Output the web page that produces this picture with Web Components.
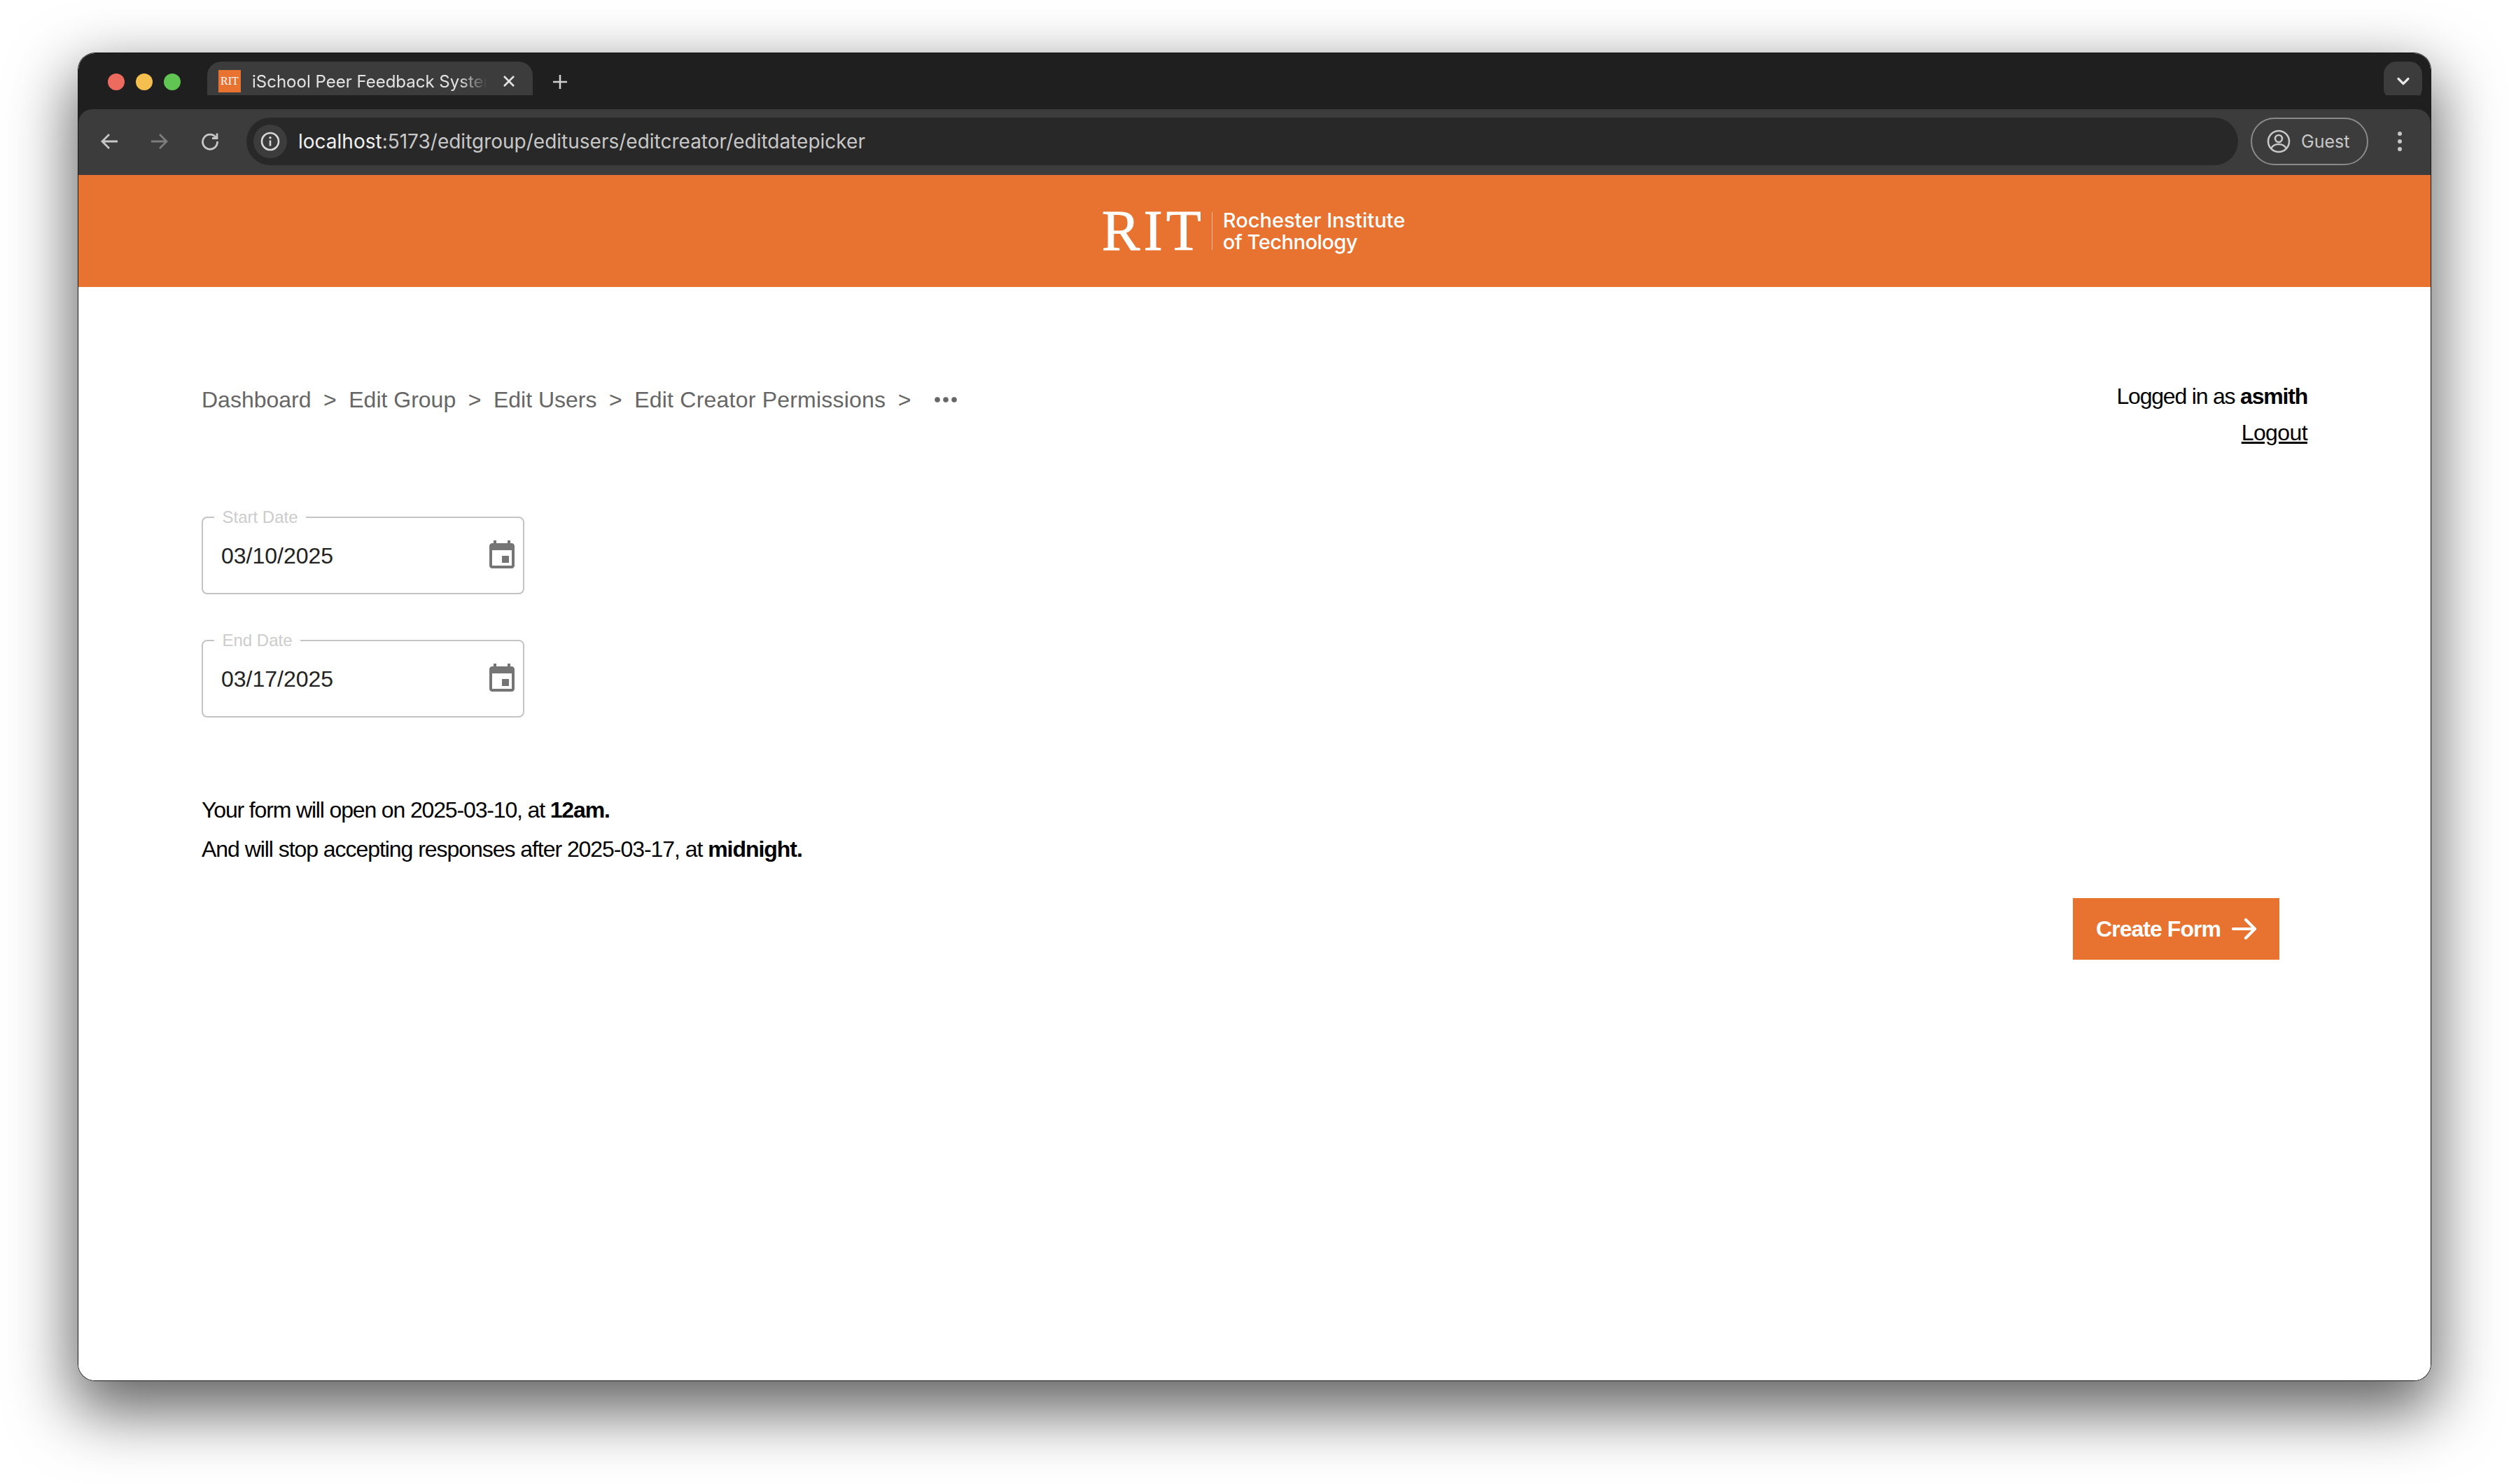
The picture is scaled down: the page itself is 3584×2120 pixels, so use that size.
<!DOCTYPE html>
<html lang="en">
<head>
<meta charset="utf-8">
<title>iSchool Peer Feedback System</title>
<style>
  html, body { margin: 0; height: 100%; background: #fff; }
  body { padding: 76px 112px 148px 112px; box-sizing: border-box; height: 2120px; overflow: hidden; display: flex; }
</style>
</head>
<body>
<browser-window>
  <tab-strip title-text="iSchool Peer Feedback System"></tab-strip>
  <address-bar host-name="localhost" path-name=":5173/editgroup/editusers/editcreator/editdatepicker"></address-bar>
  <site-banner></site-banner>
  <page-content>
    <div slot="top-left">
      <bread-crumbs items="Dashboard|Edit Group|Edit Users|Edit Creator Permissions"></bread-crumbs>
    </div>
    <user-status slot="top-right" username="asmith"></user-status>
    <date-field label="Start Date" value="03/10/2025"></date-field>
    <date-field label="End Date" value="03/17/2025"></date-field>
    <form-summary slot="summary" open-date="2025-03-10" close-date="2025-03-17"></form-summary>
    <action-button slot="action">Create Form</action-button>
  </page-content>
</browser-window>

<script>
// small helper so every component reads the same
function shadow(el, html) {
  el.attachShadow({ mode: 'open' });
  el.shadowRoot.innerHTML = html;
}

const UI_FONT = 'Inter, "Noto Sans", sans-serif';
const PAGE_FONT = '"Liberation Sans", Arial, sans-serif';

class BrowserWindow extends HTMLElement {
  constructor() {
    super();
    shadow(this, `
      <style>
        :host {
          display: block;
          flex: 1;
          border-radius: 24px;
          box-shadow: 0 0 0 1px #1a1a1a, 0 36px 90px 8px rgba(0,0,0,.62);
        }
        .frame {
          height: 100%;
          display: flex;
          flex-direction: column;
          border-radius: 24px;
          overflow: hidden;
          background: #fff;
        }
      </style>
      <div class="frame"><slot></slot></div>
    `);
  }
}

class TabStrip extends HTMLElement {
  constructor() {
    super();
    shadow(this, `
      <style>
        :host {
          display: flex;
          align-items: flex-start;
          height: 80px;
          flex: none;
          box-sizing: border-box;
          padding: 12px 12px 0 42px;
          background: #1f1f1f;
          font: 24px ${UI_FONT};
          color: #e3e3e3;
        }
        .lights { display: flex; gap: 16px; margin: 17px 38px 0 0; }
        .lights i { width: 24px; height: 24px; border-radius: 50%; display: block; }
        .tab {
          position: relative;
          width: 465px;
          height: 68px;
          box-sizing: border-box;
          padding: 12px 16px 0;
          display: flex;
          gap: 16px;
          background: #3c3c3c;
          border-radius: 20px 20px 0 0;
        }
        .tab::before, .tab::after {
          content: "";
          position: absolute;
          bottom: 0;
          width: 20px;
          height: 20px;
        }
        .tab::before { left: -20px; background: radial-gradient(circle at 0 0, transparent 19.5px, #3c3c3c 20px); }
        .tab::after { right: -20px; background: radial-gradient(circle at 100% 0, transparent 19.5px, #3c3c3c 20px); }
        .favicon {
          width: 32px;
          height: 32px;
          flex: none;
          background: #e87230;
          color: #fff;
          font: 16px/32px "Liberation Serif", serif;
          text-align: center;
        }
        .title {
          width: 336px;
          padding-top: 2px;
          line-height: 30px;
          white-space: nowrap;
          overflow: hidden;
          -webkit-mask-image: linear-gradient(90deg, #000 88%, transparent);
          mask-image: linear-gradient(90deg, #000 88%, transparent);
        }
        .close { position: absolute; left: 420px; top: 17px; }
        .plus { margin: 18px 0 0 28px; }
        .more {
          margin-left: auto;
          width: 55px;
          height: 56px;
          border-radius: 18px;
          background: #3c3c3c;
          display: flex;
          align-items: center;
          justify-content: center;
        }
      </style>
      <div class="lights">
        <i style="background:#ed6a5e"></i><i style="background:#f4bf4f"></i><i style="background:#61c554"></i>
      </div>
      <div class="tab">
        <span class="favicon">RIT</span>
        <span class="title"></span>
        <svg class="close" width="22" height="22" viewBox="0 0 22 22" fill="none" stroke="#e3e3e3" stroke-width="2.6"><path d="M4 4l14 14M18 4L4 18"/></svg>
      </div>
      <svg class="plus" width="22" height="22" viewBox="0 0 22 22" fill="none" stroke="#d0d0d0" stroke-width="2.6"><path d="M11 1v20M1 11h20"/></svg>
      <div class="more">
        <svg width="20" height="12" viewBox="0 0 20 12" fill="none" stroke="#e8e8e8" stroke-width="3.2" stroke-linecap="round" stroke-linejoin="round"><path d="M3 2.5l7 7 7-7"/></svg>
      </div>
    `);
    this.shadowRoot.querySelector('.title').textContent = this.getAttribute('title-text');
  }
}

class AddressBar extends HTMLElement {
  constructor() {
    super();
    shadow(this, `
      <style>
        :host {
          display: flex;
          align-items: center;
          height: 94px;
          flex: none;
          box-sizing: border-box;
          padding: 0 40px 2px 8px;
          background: #3c3c3c;
          border-radius: 20px 20px 0 0;
          box-shadow: 0 -20px 0 0 #1f1f1f;
          position: relative;
          font-family: ${UI_FONT};
        }
        .nav { width: 72px; display: flex; justify-content: center; }
        .pill {
          flex: 1;
          height: 68px;
          margin-left: 16px;
          border-radius: 34px;
          background: #282828;
          display: flex;
          align-items: center;
          padding-left: 10px;
          font-size: 28px;
          color: #c7c7c7;
          white-space: nowrap;
        }
        .info {
          width: 48px;
          height: 48px;
          border-radius: 50%;
          background: #3c3c3c;
          display: flex;
          align-items: center;
          justify-content: center;
          margin-right: 16px;
        }
        .host { color: #f0f0f0; }
        .guest {
          width: 168px;
          height: 68px;
          box-sizing: border-box;
          margin-left: 18px;
          border: 2px solid #8a8a8a;
          border-radius: 34px;
          display: flex;
          align-items: center;
          gap: 15px;
          padding-left: 21px;
          font-size: 25px;
          color: #c7c7c7;
        }
        .kebab { margin-left: 41px; }
      </style>
      <span class="nav">
        <svg width="26" height="24" viewBox="0 0 26 24" fill="none" stroke="#c7c7c7" stroke-width="2.8"><path d="M25 12H3M13 2L3 12l10 10"/></svg>
      </span>
      <span class="nav">
        <svg width="26" height="24" viewBox="0 0 26 24" fill="none" stroke="#7d7d7d" stroke-width="2.8"><path d="M1 12h22M13 2l10 10-10 10"/></svg>
      </span>
      <span class="nav">
        <svg width="26" height="26" viewBox="0 0 26 26" fill="none" stroke="#c7c7c7" stroke-width="2.8"><path d="M21.5 7.5A10.5 10.5 0 1 0 23.5 13"/><path d="M23 1.5V8.5H16" /></svg>
      </span>
      <div class="pill">
        <span class="info">
          <svg width="28" height="28" viewBox="0 0 28 28" fill="none"><circle cx="14" cy="14" r="12" stroke="#d8d8d8" stroke-width="2.6"/><rect x="12.7" y="12.5" width="2.6" height="8" fill="#d8d8d8"/><circle cx="14" cy="8.8" r="1.7" fill="#d8d8d8"/></svg>
        </span>
        <span><span class="host"></span><span class="path"></span></span>
      </div>
      <div class="guest">
        <svg width="34" height="34" viewBox="0 0 34 34" fill="none" stroke="#c7c7c7" stroke-width="2.6"><circle cx="17" cy="17" r="15"/><circle cx="17" cy="13" r="5"/><path d="M6 27c3-5 7-6 11-6s8 1 11 6"/></svg>
        <span>Guest</span>
      </div>
      <svg class="kebab" width="8" height="30" viewBox="0 0 8 30" fill="#c7c7c7"><circle cx="4" cy="4" r="3"/><circle cx="4" cy="15" r="3"/><circle cx="4" cy="26" r="3"/></svg>
    `);
    this.shadowRoot.querySelector('.host').textContent = this.getAttribute('host-name');
    this.shadowRoot.querySelector('.path').textContent = this.getAttribute('path-name');
  }
}

class SiteBanner extends HTMLElement {
  constructor() {
    super();
    shadow(this, `
      <style>
        :host {
          display: flex;
          flex: none;
          height: 160px;
          align-items: center;
          justify-content: center;
          background: #e87230;
          color: #fff;
          padding-right: 3px;
        }
        .mark {
          font: 82px/54px "Liberation Serif", serif;
          letter-spacing: 5px;
          height: 54px;
          -webkit-text-stroke: .8px #fff;
        }
        .rule { width: 1px; height: 54px; background: #f6c8ab; margin: 0 15px 0 10px; }
        .name { font: 500 29px/31px Inter, sans-serif; }
        .name span { letter-spacing: -.5px; }
      </style>
      <span class="mark">RIT</span>
      <span class="rule"></span>
      <span class="name">Rochester Institute<br><span>of Technology</span></span>
    `);
  }
}

class PageContent extends HTMLElement {
  constructor() {
    super();
    shadow(this, `
      <style>
        :host {
          display: flex;
          flex-direction: column;
          flex: 1;
          padding: 130px 176px 0 176px;
          background: #fff;
        }
        .top { display: flex; justify-content: space-between; align-items: flex-start; }
        .fields { display: flex; flex-direction: column; gap: 54px; margin-top: 83px; }
        .summary { margin-top: 104px; }
        .action { display: flex; justify-content: flex-end; padding-right: 40px; margin-top: 42px; }
      </style>
      <div class="top"><slot name="top-left"></slot><slot name="top-right"></slot></div>
      <div class="fields"><slot></slot></div>
      <div class="summary"><slot name="summary"></slot></div>
      <div class="action"><slot name="action"></slot></div>
    `);
  }
}

class BreadCrumbs extends HTMLElement {
  constructor() {
    super();
    shadow(this, `
      <style>
        :host {
          display: flex;
          align-items: center;
          height: 48px;
          margin-top: 7px;
          font: 32px/48px ${PAGE_FONT};
          color: #666;
          white-space: nowrap;
        }
        .sep { margin: 0 17.5px; }
        .last { letter-spacing: .22px; }
        svg { margin-left: 16px; }
      </style>
    `);
    const items = this.getAttribute('items').split('|');
    items.forEach((item, i) => {
      const label = document.createElement('span');
      label.textContent = item;
      if (i === items.length - 1) label.className = 'last';
      const sep = document.createElement('span');
      sep.className = 'sep';
      sep.textContent = '>';
      this.shadowRoot.append(label, sep);
    });
    const dots = document.createElementNS('http://www.w3.org/2000/svg', 'svg');
    dots.setAttribute('width', '32');
    dots.setAttribute('height', '8');
    dots.setAttribute('viewBox', '0 0 32 8');
    dots.innerHTML = '<circle cx="4" cy="4" r="3.8" fill="#666"/><circle cx="16" cy="4" r="3.8" fill="#666"/><circle cx="28" cy="4" r="3.8" fill="#666"/>';
    this.shadowRoot.append(dots);
  }
}

class UserStatus extends HTMLElement {
  constructor() {
    super();
    shadow(this, `
      <style>
        :host {
          display: block;
          text-align: right;
          font: 32px/52px ${PAGE_FONT};
          letter-spacing: -1.2px;
          color: #000;
        }
        a { color: inherit; text-decoration: underline; letter-spacing: -.6px; }
        b { font-weight: 700; }
      </style>
      <div>Logged in as <b></b></div>
      <div><a>Logout</a></div>
    `);
    this.shadowRoot.querySelector('b').textContent = this.getAttribute('username');
  }
}

class DateField extends HTMLElement {
  constructor() {
    super();
    shadow(this, `
      <style>
        :host { display: block; width: 461px; font-family: ${PAGE_FONT}; }
        fieldset {
          margin: 0;
          box-sizing: border-box;
          height: 122px;
          padding: 0 6px 10px 26px;
          border: 2px solid #c4c4c4;
          border-radius: 8px;
          display: flex;
          align-items: center;
          justify-content: space-between;
        }
        legend {
          margin-left: -10px;
          padding: 0 11.5px;
          font-size: 24px;
          line-height: 24px;
          color: #ccc;
        }
        .value { font-size: 32px; color: #222; }
        svg { display: block; fill: #757575; }
      </style>
      <fieldset>
        <legend></legend>
        <span class="value"></span>
        <svg width="48" height="48" viewBox="0 0 24 24"><path d="M17 12h-5v5h5v-5zM16 1v2H8V1H6v2H5c-1.11 0-1.99.9-1.99 2L3 19c0 1.1.89 2 2 2h14c1.1 0 2-.9 2-2V5c0-1.1-.9-2-2-2h-1V1h-2zm3 18H5V8h14v11z"/></svg>
      </fieldset>
    `);
    this.shadowRoot.querySelector('legend').textContent = this.getAttribute('label');
    this.shadowRoot.querySelector('.value').textContent = this.getAttribute('value');
  }
}

class FormSummary extends HTMLElement {
  constructor() {
    super();
    shadow(this, `
      <style>
        :host {
          display: block;
          font: 32px/56px ${PAGE_FONT};
          letter-spacing: -1.05px;
          color: #000;
        }
        .first { letter-spacing: -1.15px; }
      </style>
      <div class="first">Your form will open on <span class="open"></span>, at <b>12am.</b></div>
      <div>And will stop accepting responses after <span class="close"></span>, at <b>midnight.</b></div>
    `);
    this.shadowRoot.querySelector('.open').textContent = this.getAttribute('open-date');
    this.shadowRoot.querySelector('.close').textContent = this.getAttribute('close-date');
  }
}

class ActionButton extends HTMLElement {
  constructor() {
    super();
    shadow(this, `
      <style>
        :host {
          display: inline-flex;
          align-items: center;
          width: 295px;
          height: 88px;
          box-sizing: border-box;
          padding-left: 33px;
          gap: 16px;
          background: #e87230;
          color: #fff;
          font: 700 32px ${PAGE_FONT};
          letter-spacing: -.95px;
        }
      </style>
      <slot></slot>
      <svg width="36" height="32" viewBox="0 0 36 32" fill="none" stroke="#fff" stroke-width="4.2" stroke-linecap="round" stroke-linejoin="round"><path d="M2 16h31M20 3l13 13-13 13"/></svg>
    `);
  }
}

customElements.define('browser-window', BrowserWindow);
customElements.define('tab-strip', TabStrip);
customElements.define('address-bar', AddressBar);
customElements.define('site-banner', SiteBanner);
customElements.define('page-content', PageContent);
customElements.define('bread-crumbs', BreadCrumbs);
customElements.define('user-status', UserStatus);
customElements.define('date-field', DateField);
customElements.define('form-summary', FormSummary);
customElements.define('action-button', ActionButton);
</script>
</body>
</html>
